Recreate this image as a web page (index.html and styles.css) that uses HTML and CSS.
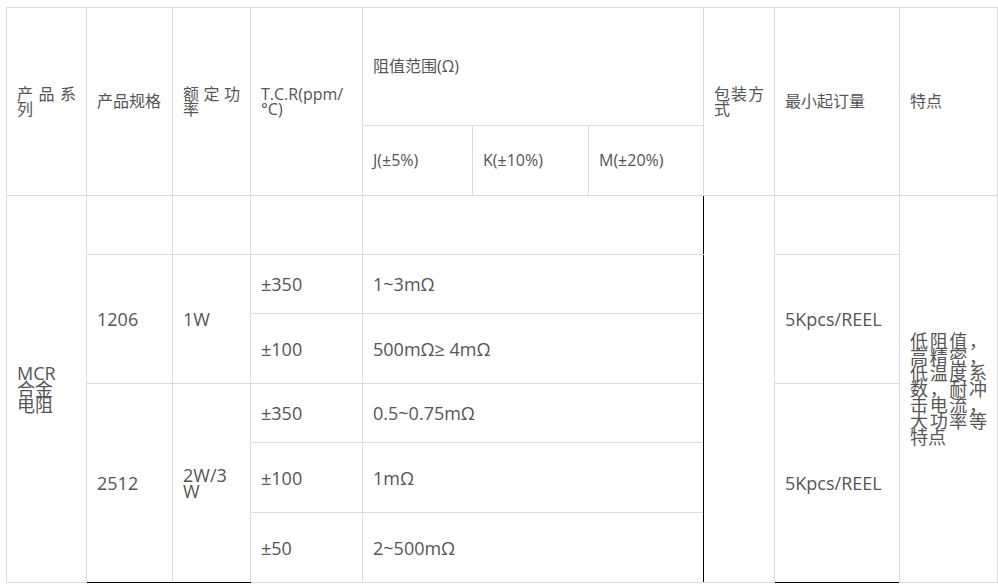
FILE: index.html
```html
<!DOCTYPE html>
<html lang="zh-CN">
<head>
<meta charset="utf-8">
<title>MCR 合金电阻</title>
<link rel="stylesheet" href="styles.css">
</head>
<body>
<table class="spec">
  <colgroup>
    <col class="c1"><col class="c2"><col class="c3"><col class="c4"><col class="c5"><col class="c6"><col class="c7"><col class="c8"><col class="c9"><col class="c10">
  </colgroup>
  <thead>
    <tr class="h1">
      <td rowspan="2">产品系列</td>
      <td rowspan="2">产品规格</td>
      <td rowspan="2">额定功率</td>
      <td rowspan="2">T.C.R(ppm/<br>°C)</td>
      <td colspan="3">阻值范围(Ω)</td>
      <td rowspan="2">包装方式</td>
      <td rowspan="2">最小起订量</td>
      <td rowspan="2">特点</td>
    </tr>
    <tr class="h2">
      <td>J(±5%)</td>
      <td>K(±10%)</td>
      <td>M(±20%)</td>
    </tr>
  </thead>
  <tbody>
    <tr class="r59">
      <td rowspan="6" class="series">MCR<br>合金<br>电阻</td>
      <td></td>
      <td></td>
      <td></td>
      <td colspan="3" class="range"></td>
      <td rowspan="6" class="pack"></td>
      <td></td>
      <td rowspan="6" class="feat">低阻值，高精密，低温度系数，耐冲击电流，大功率等特点</td>
    </tr>
    <tr class="r59">
      <td rowspan="2">1206</td>
      <td rowspan="2">1W</td>
      <td>±350</td>
      <td colspan="3" class="range">1~3mΩ</td>
      <td rowspan="2">5Kpcs/REEL</td>
    </tr>
    <tr class="r70">
      <td>±100</td>
      <td colspan="3" class="range">500mΩ≥ 4mΩ</td>
    </tr>
    <tr class="r59">
      <td rowspan="3" class="dark-bottom">2512</td>
      <td rowspan="3" class="dark-bottom">2W/3W</td>
      <td>±350</td>
      <td colspan="3" class="range">0.5~0.75mΩ</td>
      <td rowspan="3" class="dark-bottom">5Kpcs/REEL</td>
    </tr>
    <tr class="r70">
      <td>±100</td>
      <td colspan="3" class="range">1mΩ</td>
    </tr>
    <tr class="r70">
      <td>±50</td>
      <td colspan="3" class="range">2~500mΩ</td>
    </tr>
  </tbody>
</table>
</body>
</html>
```

FILE: styles.css
```css
html, body {
  margin: 0;
  padding: 0;
  background: #fff;
}

body {
  padding: 7px 0 0 6px;
}

.spec {
  border-collapse: collapse;
  table-layout: fixed;
  width: 991px;
  font-family: "Open Sans", "Noto Sans CJK SC", sans-serif;
  color: #555;
}

.c1 { width: 80px; }
.c2 { width: 86px; }
.c3 { width: 78px; }
.c4 { width: 112px; }
.c5 { width: 110px; }
.c6 { width: 116px; }
.c7 { width: 115px; }
.c8 { width: 71px; }
.c9 { width: 125px; }
.c10 { width: 98px; }

.spec td {
  border: 1px solid #dcdcdc;
  padding: 0 10px;
  vertical-align: middle;
  text-align: justify;
  word-break: break-all;
  font-size: 18px;
  line-height: 16px;
}

.spec thead td {
  font-size: 16px;
  line-height: 15px;
}

.h1 { height: 118px; }
.h2 { height: 70px; }
.r59 { height: 59px; }
.r70 { height: 70px; }

.spec td.range {
  border-right-color: #000;
}

.spec td.pack {
  border-left-color: #000;
}

.spec td.dark-bottom {
  border-bottom-color: #000;
}
```
